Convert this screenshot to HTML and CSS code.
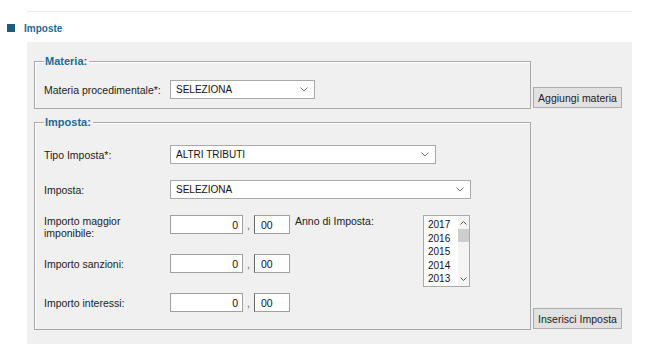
FILE: index.html
```html
<!DOCTYPE html>
<html lang="it">
<head>
    <meta charset="UTF-8">
    <title>Imposte</title>
    <link rel="stylesheet" href="styles.css">
</head>
<body>

    <div class="top-line"></div>

    <div class="section-title">
        <span class="square"></span>
        <span>Imposte</span>
    </div>

    <div class="panel">
        <div class="panel-row materia-row">
            <fieldset class="box">
                <legend>Materia:</legend>
                <div class="field">
                    <label>Materia procedimentale*:</label>
                    <div class="select w-materia">
                        <span>SELEZIONA</span>
                        <svg width="8" height="5" viewBox="0 0 8 5"><path d="M0.5 0.5 L4 4 L7.5 0.5" fill="none" stroke="#777" stroke-width="1"/></svg>
                    </div>
                </div>
            </fieldset>
            <button class="btn">Aggiungi materia</button>
        </div>

        <div class="panel-row imposta-row">
            <fieldset class="box">
                <legend>Imposta:</legend>
                <div class="field">
                    <label>Tipo Imposta*:</label>
                    <div class="select w-tipo">
                        <span>ALTRI TRIBUTI</span>
                        <svg width="8" height="5" viewBox="0 0 8 5"><path d="M0.5 0.5 L4 4 L7.5 0.5" fill="none" stroke="#777" stroke-width="1"/></svg>
                    </div>
                </div>
                <div class="field">
                    <label>Imposta:</label>
                    <div class="select w-imposta">
                        <span>SELEZIONA</span>
                        <svg width="8" height="5" viewBox="0 0 8 5"><path d="M0.5 0.5 L4 4 L7.5 0.5" fill="none" stroke="#777" stroke-width="1"/></svg>
                    </div>
                </div>

                <div class="amounts">
                    <label class="name top">Importo maggior imponibile:</label>
                    <input class="int" type="text" value="0">
                    <span class="comma">,</span>
                    <input class="dec" type="text" value="00">
                    <label class="top anno">Anno di Imposta:</label>
                    <div class="listbox">
                        <div class="years">
                            <div>2017</div>
                            <div>2016</div>
                            <div>2015</div>
                            <div>2014</div>
                            <div>2013</div>
                        </div>
                        <div class="scrollbar">
                            <svg width="7" height="4" viewBox="0 0 7 4"><path d="M0.5 3.5 L3.5 0.5 L6.5 3.5" fill="none" stroke="#555" stroke-width="1"/></svg>
                            <div class="thumb"></div>
                            <svg class="down" width="7" height="4" viewBox="0 0 7 4"><path d="M0.5 0.5 L3.5 3.5 L6.5 0.5" fill="none" stroke="#555" stroke-width="1"/></svg>
                        </div>
                    </div>

                    <label class="name">Importo sanzioni:</label>
                    <input class="int" type="text" value="0">
                    <span class="comma">,</span>
                    <input class="dec" type="text" value="00">

                    <label class="name">Importo interessi:</label>
                    <input class="int" type="text" value="0">
                    <span class="comma">,</span>
                    <input class="dec" type="text" value="00">
                </div>
            </fieldset>
            <button class="btn">Inserisci Imposta</button>
        </div>
    </div>

</body>
</html>
```

FILE: styles.css
```css
body {
    margin: 0;
    font-family: 'Liberation Sans', Arial, sans-serif;
    font-size: 10.5px;
    color: #222;
    background: #fff;
}

.top-line {
    margin: 11px 0 0 27px;
    width: 605px;
    height: 1px;
    background: #ebebeb;
}

.section-title {
    display: flex;
    align-items: center;
    gap: 9px;
    margin: 10px 0 0 7px;
    height: 12px;
    font-size: 10px;
    font-weight: bold;
    color: #236a91;
}

.section-title .square {
    width: 8px;
    height: 8px;
    background: #1d5a7c;
}

.panel {
    margin: 8px 0 0 27px;
    width: 605px;
    height: 302px;
    box-sizing: border-box;
    padding: 13px 10px 0 7px;
    background: #f0f0f0;
}

.panel-row {
    display: flex;
    align-items: flex-end;
    gap: 2px;
}

.imposta-row {
    margin-top: 7px;
}

.box {
    width: 497px;
    box-sizing: border-box;
    margin: 0;
    border: 1px solid #a9a9a9;
    box-shadow: inset 1px 1px 0 #fff;
    padding: 12px 9px 9px 9px;
}

.imposta-row .box {
    padding-top: 16px;
    padding-bottom: 17px;
}

legend {
    margin-left: 0;
    padding: 0 2px 0 1px;
    font-size: 11px;
    line-height: 13px;
    font-weight: bold;
    color: #236a91;
}

.field {
    display: flex;
    align-items: center;
    height: 19px;
}

.imposta-row .field {
    margin-bottom: 16px;
}

.field label {
    width: 126px;
    flex-shrink: 0;
}

.select {
    display: flex;
    align-items: center;
    justify-content: space-between;
    box-sizing: border-box;
    height: 19px;
    padding: 0 6px 0 5px;
    background: #fff;
    border: 1px solid #a9a9a9;
    font-size: 10px;
    color: #111;
}

.w-materia { width: 145px; }
.w-tipo { width: 266px; }
.w-imposta { width: 301px; }

.amounts {
    display: grid;
    grid-template-columns: 126px 73px 11px 36px 133px 48px;
    grid-template-rows: 19px 19px 19px;
    row-gap: 20px;
    align-items: center;
}

.amounts .name {
    grid-column: 1;
}

.amounts label.top {
    align-self: start;
    line-height: 12px;
}

.amounts .anno {
    grid-column: 5;
    grid-row: 1;
    padding-left: 5px;
}

.amounts input {
    box-sizing: border-box;
    height: 19px;
    margin: 0;
    border: 1px solid #a0a0a0;
    background: #fff;
    font-family: 'Liberation Sans', Arial, sans-serif;
    font-size: 10.5px;
    color: #111;
    outline: none;
}

.amounts .int {
    grid-column: 2;
    width: 73px;
    text-align: right;
    padding: 0 4px 0 2px;
}

.amounts .dec {
    grid-column: 4;
    width: 36px;
    padding: 0 2px 0 6px;
    border-left-color: #666;
}

.comma {
    grid-column: 3;
    text-align: center;
    color: #666;
}

.listbox {
    grid-row: 1 / span 3;
    grid-column: 6;
    align-self: start;
    display: flex;
    box-sizing: border-box;
    width: 47px;
    height: 72px;
    border: 1px solid #a9a9a9;
    background: #fff;
}

.years {
    flex: 1;
    padding: 2px 0 0 4px;
    font-size: 10px;
    line-height: 13.5px;
    color: #111;
}

.scrollbar {
    width: 11px;
    display: flex;
    flex-direction: column;
    align-items: center;
    padding-top: 5px;
    background: #f4f4f4;
}

.scrollbar .thumb {
    width: 11px;
    height: 13px;
    margin-top: 4px;
    background: #cdcdcd;
}

.scrollbar .down {
    margin-top: auto;
    margin-bottom: 5px;
}

.btn {
    width: 89px;
    height: 21px;
    padding: 0;
    margin-bottom: 1px;
    background: #e1e1e1;
    border: 1px solid #adadad;
    font-family: 'Liberation Sans', Arial, sans-serif;
    font-size: 10.5px;
    color: #222;
}
```
